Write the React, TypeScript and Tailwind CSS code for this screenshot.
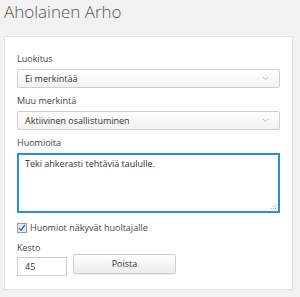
import { ChevronDown } from "lucide-react";

const font = { fontFamily: '"Open Sans", "DejaVu Sans", sans-serif' };

function Select({ value }: { value: string }) {
  return (
    <div className="flex h-[19px] items-center justify-between rounded-[2px] border border-[#cfcfcf] bg-gradient-to-b from-white to-[#f1f1f1] pl-[7px] pr-[9px] text-[9px] text-[#333]">
      <span>{value}</span>
      <ChevronDown size={9} strokeWidth={1.5} className="text-[#888]" />
    </div>
  );
}

export default function App() {
  return (
    <div className="h-[297px] w-[300px] bg-[#f2f2f2] pl-[4px] pr-[7px]" style={font}>
      <h1 className="pt-[2px] text-[17px] font-light leading-[20px] text-[#555]">
        Aholainen Arho
      </h1>
      <div className="mt-[14px] border border-[#e3e3e3] bg-white px-[12px] pb-[13px] pt-[15px] text-[9px] text-[#444]">
        <label className="block leading-[14px]">Luokitus</label>
        <div className="mt-[3px]">
          <Select value="Ei merkintää" />
        </div>

        <label className="mt-[6px] block leading-[14px]">Muu merkintä</label>
        <div className="mt-[3px]">
          <Select value="Aktiivinen osallistuminen" />
        </div>

        <label className="mt-[6px] block leading-[14px]">Huomioita</label>
        <div className="relative mt-[3px]">
          <textarea
            className="block h-[60px] w-full resize-none border-2 border-[#2a8fd8] px-[6px] py-[2px] text-[9px] leading-[14px] text-[#333] outline-none"
            defaultValue="Teki ahkerasti tehtäviä taululle."
          />
          <svg className="absolute bottom-[3px] right-[3px]" width="6" height="6" viewBox="0 0 6 6">
            <rect x="4" y="0" width="1" height="1" fill="#b5b5b5" />
            <rect x="2" y="2" width="1" height="1" fill="#b5b5b5" />
            <rect x="4" y="2" width="1" height="1" fill="#b5b5b5" />
            <rect x="0" y="4" width="1" height="1" fill="#b5b5b5" />
            <rect x="2" y="4" width="1" height="1" fill="#b5b5b5" />
            <rect x="4" y="4" width="1" height="1" fill="#b5b5b5" />
          </svg>
        </div>

        <label className="mt-[8px] flex items-center gap-[3px] leading-[14px]">
          <span className="flex h-[10px] w-[10px] items-center justify-center border border-[#9a9a9a] bg-[#e8e8e8]">
            <svg width="8" height="8" viewBox="0 0 8 8">
              <path d="M1.2 4.2 L3 6.3 L6.8 1" fill="none" stroke="#3a5ea8" strokeWidth="1.3" />
            </svg>
          </span>
          Huomiot näkyvät huoltajalle
        </label>

        <label className="mt-[6px] block leading-[13px]">Kesto</label>
        <div className="flex items-start gap-[6px]">
          <input
            className="mt-[3px] h-[19px] w-[50px] border border-[#cfcfcf] px-[7px] text-[9px] text-[#333] outline-none"
            defaultValue="45"
          />
          <button className="h-[20px] w-[103px] rounded-[2px] border border-[#cfcfcf] bg-gradient-to-b from-white to-[#ececec] text-[9px] text-[#333] shadow-[0_1px_1px_rgba(0,0,0,0.08)]">
            Poista
          </button>
        </div>
      </div>
    </div>
  );
}
